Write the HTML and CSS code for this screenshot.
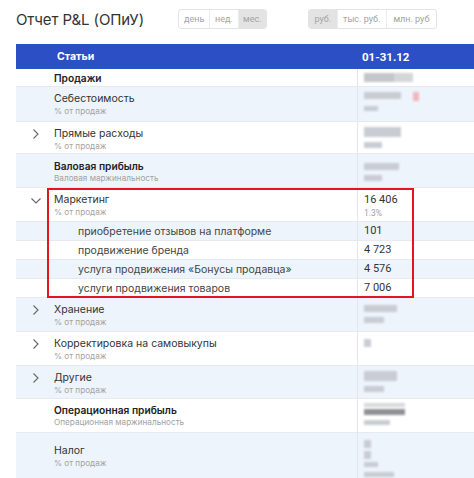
FILE: index.html
```html
<!DOCTYPE html>
<html lang="ru">
<head>
<meta charset="utf-8">
<title>Отчет P&amp;L (ОПиУ)</title>
<link rel="stylesheet" href="styles.css">
</head>
<body>
<div class="page">
  <div class="toolbar">
    <h1 class="title">Отчет P&amp;L (ОПиУ)</h1>
    <div class="seg seg-period"><span class="b-day">день</span><span class="b-week">нед.</span><span class="b-month on">мес.</span></div>
    <div class="seg seg-unit"><span class="b-rub on">руб.</span><span class="b-th">тыс. руб.</span><span class="b-mln">млн. руб</span></div>
  </div>

  <div class="table">
    <div class="row thead">
      <div class="c-ico"></div>
      <div class="c-label">Статьи</div>
      <div class="c-val">01-31.12</div>
    </div>

    <div class="row h18">
      <div class="c-ico"></div>
      <div class="c-label"><div class="main strong">Продажи</div></div>
      <div class="c-val"><div class="blk b-sales"></div></div>
    </div>

    <div class="row h35 alt">
      <div class="c-ico"></div>
      <div class="c-label"><div class="main">Себестоимость</div><div class="sub">% от продаж</div></div>
      <div class="c-val"><div class="line"><div class="blk b37"></div><div class="blk red"></div></div><div class="blk s14"></div></div>
    </div>

    <div class="row h31">
      <div class="c-ico"><svg class="chev" viewBox="0 0 8 12"><polyline points="1.5,1.5 6,6 1.5,10.5"/></svg></div>
      <div class="c-label"><div class="main">Прямые расходы</div><div class="sub">% от продаж</div></div>
      <div class="c-val"><div class="blk b37 tall"></div><div class="blk s18"></div></div>
    </div>

    <div class="row h34 alt">
      <div class="c-ico"></div>
      <div class="c-label"><div class="main strong">Валовая прибыль</div><div class="sub">Валовая маржинальность</div></div>
      <div class="c-val"><div class="blk b35"></div><div class="blk s18"></div></div>
    </div>

    <div class="group">
      <div class="row h34">
        <div class="c-ico"><svg class="chev-down" viewBox="0 0 12 8"><polyline points="1.5,1.5 6,6 10.5,1.5"/></svg></div>
        <div class="c-label"><div class="main">Маркетинг</div><div class="sub">% от продаж</div></div>
        <div class="c-val"><div class="num">16 406</div><div class="pct">1.3%</div></div>
      </div>
      <div class="row h19 alt child">
        <div class="c-ico"></div>
        <div class="c-label">приобретение отзывов на платформе</div>
        <div class="c-val"><div class="num">101</div></div>
      </div>
      <div class="row h19 child">
        <div class="c-ico"></div>
        <div class="c-label">продвижение бренда</div>
        <div class="c-val"><div class="num">4 723</div></div>
      </div>
      <div class="row h19 alt child">
        <div class="c-ico"></div>
        <div class="c-label">услуга продвижения «Бонусы продавца»</div>
        <div class="c-val"><div class="num">4 576</div></div>
      </div>
      <div class="row h19 child">
        <div class="c-ico"></div>
        <div class="c-label">услуги продвижения товаров</div>
        <div class="c-val"><div class="num">7 006</div></div>
      </div>
      <div class="highlight"></div>
    </div>

    <div class="row h34 alt">
      <div class="c-ico"><svg class="chev" viewBox="0 0 8 12"><polyline points="1.5,1.5 6,6 1.5,10.5"/></svg></div>
      <div class="c-label"><div class="main">Хранение</div><div class="sub">% от продаж</div></div>
      <div class="c-val"><div class="blk b33"></div><div class="blk s20"></div></div>
    </div>

    <div class="row h34">
      <div class="c-ico"><svg class="chev" viewBox="0 0 8 12"><polyline points="1.5,1.5 6,6 1.5,10.5"/></svg></div>
      <div class="c-label"><div class="main">Корректировка на самовыкупы</div><div class="sub">% от продаж</div></div>
      <div class="c-val"><div class="blk dot"></div></div>
    </div>

    <div class="row h33 alt">
      <div class="c-ico"><svg class="chev" viewBox="0 0 8 12"><polyline points="1.5,1.5 6,6 1.5,10.5"/></svg></div>
      <div class="c-label"><div class="main">Другие</div><div class="sub">% от продаж</div></div>
      <div class="c-val"><div class="blk b33 tall"></div><div class="blk s20"></div></div>
    </div>

    <div class="row h34 op">
      <div class="c-ico"></div>
      <div class="c-label"><div class="main strong">Операционная прибыль</div><div class="sub">Операционная маржинальность</div></div>
      <div class="c-val"><div class="blk b41 thin"></div><div class="blk b41 dark"></div><div class="blk s26"></div></div>
    </div>

    <div class="row h46 alt tax">
      <div class="c-ico"></div>
      <div class="c-label"><div class="main">Налог</div><div class="sub">% от продаж</div></div>
      <div class="c-val"><div class="blk dot"></div><div class="blk dot"></div><div class="blk s14"></div><div class="blk s30"></div></div>
    </div>
  </div>
</div>
</body>
</html>
```

FILE: styles.css
```css
* { box-sizing: border-box; }
html, body { margin: 0; padding: 0; background: #fff; }
body {
  font-family: "Inter", "Roboto", "Liberation Sans", sans-serif;
  color: #333;
  overflow: hidden;
}
.page { padding-left: 16px; width: 474px; }

.toolbar {
  display: flex;
  align-items: center;
  height: 44px;
  padding-bottom: 6px;
}
.title {
  margin: 0;
  font-size: 15px;
  font-weight: 400;
  color: #333;
  width: 162px;
  letter-spacing: -0.1px;
}
.seg {
  display: flex;
  height: 20px;
  border: 1px solid #e4e4e4;
  border-radius: 3px;
  overflow: hidden;
}
.seg span {
  display: flex;
  align-items: center;
  justify-content: center;
  font-family: "Roboto", "Liberation Sans", sans-serif;
  font-size: 9px;
  color: #a3a3a3;
  border-left: 1px solid #ececec;
}
.seg span:first-child { border-left: 0; }
.seg span.on { background: #e3e3e3; }
.seg-period { width: 89px; }
.b-day { width: 31px; }
.b-week { width: 29px; }
.b-month { width: 29px; }
.seg-unit { width: 129px; margin-left: 41px; }
.b-rub { width: 28px; }
.b-th { width: 50px; }
.b-mln { width: 51px; }

.table { width: 458px; }
.row {
  display: grid;
  grid-template-columns: 38px 303px 117px;
  border-bottom: 1px solid #e6e9ee;
  background: #fff;
}
.row.alt { background: #eef4fb; }
.c-ico { display: flex; justify-content: center; padding-left: 2px; }
.c-label { padding-top: 5px; }
.c-val {
  border-left: 1px solid #e3e6ea;
  padding-left: 6px;
  padding-top: 5px;
  font-family: "Roboto", "Liberation Sans", sans-serif;
}

.thead {
  background: #2c4fc6;
  color: #fff;
  height: 25px;
  border-bottom: 0;
  font-weight: 700;
  font-size: 10.5px;
}
.thead .c-label { padding: 0 0 0 3px; display: flex; align-items: center; }
.thead .c-val { border-left: 0; padding: 0 0 0 5px; display: flex; align-items: center; font-size: 11.5px; }

.h18 { height: 18px; }
.h19 { height: 19px; }
.h31 { height: 32px; }
.h33 { height: 33px; }
.h34 { height: 34px; }
.h35 { height: 35px; }
.h46 { height: 46px; }
.h18 .c-label { padding-top: 2px; }

.main { font-size: 10.5px; line-height: 14px; color: #333; }
.main.strong { font-weight: 600; color: #222; font-size: 10.2px; }
.sub { font-size: 8.2px; line-height: 10px; color: #a2a2a2; }

.chev { width: 8px; height: 12px; margin-top: 6px; }
.chev-down { width: 12px; height: 8px; margin-top: 9px; }
.chev polyline, .chev-down polyline { fill: none; stroke: #666; stroke-width: 1.1; }

.child .c-label { padding: 0 0 0 24px; display: flex; align-items: center; font-size: 10.5px; color: #444; }
.child .c-val { padding-top: 0; display: flex; align-items: center; }
.num { font-size: 11px; line-height: 14px; color: #333; }
.pct { font-size: 8.5px; line-height: 12px; color: #a0a0a0; }

.group { position: relative; }
.highlight {
  position: absolute;
  left: 31px;
  top: 0;
  width: 367px;
  height: 110px;
  border: 2px solid #e0171c;
  pointer-events: none;
}

.op .c-label, .op .c-val { padding-top: 4px; }
.tax .c-label { padding-top: 11px; }

/* blurred (hidden) values */
.blk {
  background: #c9cdd3;
  filter: blur(1.3px);
  height: 7px;
  margin-bottom: 5px;
}
.line { display: flex; gap: 12px; align-items: flex-start; }
.b-sales { width: 49px; height: 9px; margin-top: -1px; background: linear-gradient(90deg, #c3c6cc 0 30px, #d4d6da 30px); }
.b37 { width: 37px; }
.b35 { width: 35px; margin-top: 4px; }
.b33 { width: 33px; margin-top: 2px; }
.b41 { width: 41px; }
.tall { height: 10px; margin-top: 0; }
.red { width: 6px; height: 9px; background: #efb8bd; }
.s14 { width: 14px; height: 5px; }
.s18 { width: 18px; height: 6px; }
.s20 { width: 20px; height: 6px; }
.s26 { width: 26px; height: 5px; margin-top: 3px; }
.s30 { width: 30px; height: 5px; }
.dot { width: 7px; height: 8px; margin-top: 2px; margin-bottom: 3px; }
.thin { height: 4px; margin-bottom: 2px; background: #d7d9dd; }
.dark { height: 6px; background: #8f9194; }
```
